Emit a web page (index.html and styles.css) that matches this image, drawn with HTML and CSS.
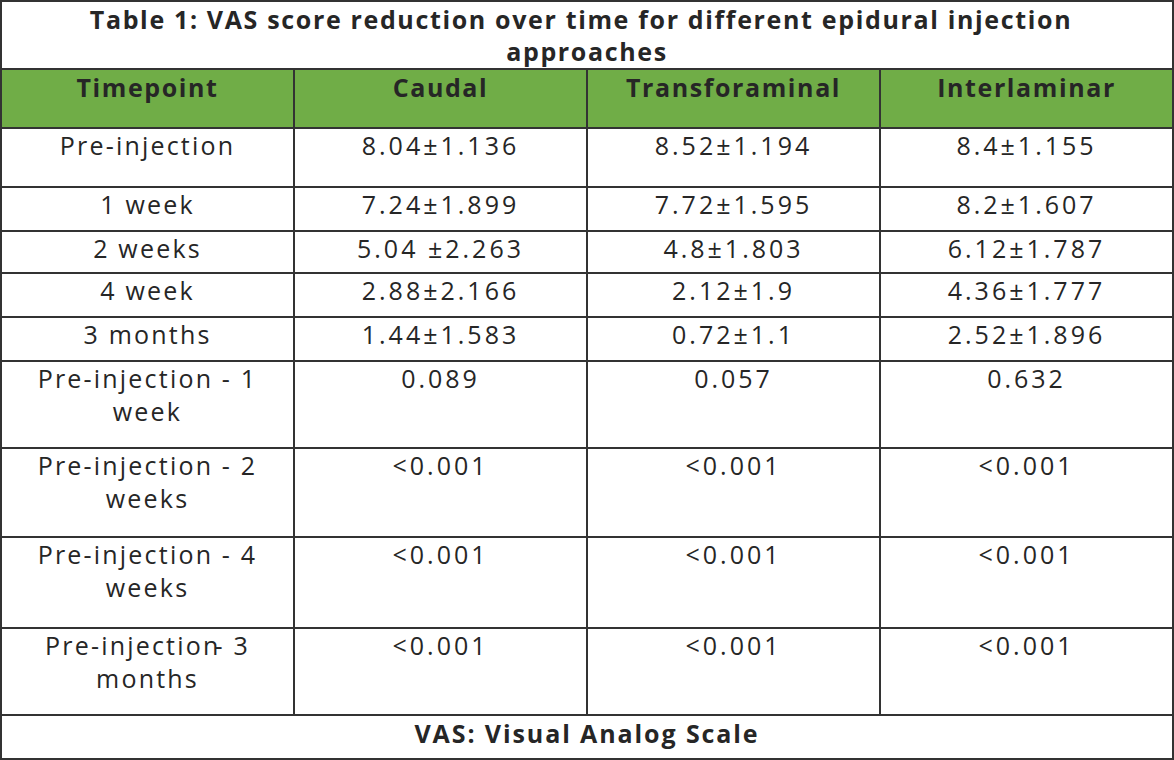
FILE: index.html
```html
<!DOCTYPE html>
<html lang="en">
<head>
<meta charset="utf-8">
<title>Table 1: VAS score reduction</title>
<link rel="stylesheet" href="styles.css">
</head>
<body>
<div class="vas-table">
  <div class="cell title"><span class="title-line">Table 1: VAS score reduction over time for different epidural injection</span><br>approaches</div>

  <div class="cell head">Timepoint</div>
  <div class="cell head">Caudal</div>
  <div class="cell head">Transforaminal</div>
  <div class="cell head">Interlaminar</div>

  <div class="cell label">Pre-injection</div>
  <div class="cell num">8.04±1.136</div>
  <div class="cell num">8.52±1.194</div>
  <div class="cell num">8.4±1.155</div>

  <div class="cell label">1 week</div>
  <div class="cell num">7.24±1.899</div>
  <div class="cell num">7.72±1.595</div>
  <div class="cell num">8.2±1.607</div>

  <div class="cell label">2 weeks</div>
  <div class="cell num">5.04 ±2.263</div>
  <div class="cell num">4.8±1.803</div>
  <div class="cell num">6.12±1.787</div>

  <div class="cell label">4 week</div>
  <div class="cell num">2.88±2.166</div>
  <div class="cell num">2.12±1.9</div>
  <div class="cell num">4.36±1.777</div>

  <div class="cell label">3 months</div>
  <div class="cell num">1.44±1.583</div>
  <div class="cell num">0.72±1.1</div>
  <div class="cell num">2.52±1.896</div>

  <div class="cell label">Pre-injection - 1<br>week</div>
  <div class="cell num">0.089</div>
  <div class="cell num">0.057</div>
  <div class="cell num">0.632</div>

  <div class="cell label">Pre-injection - 2<br>weeks</div>
  <div class="cell num">&lt;0.001</div>
  <div class="cell num">&lt;0.001</div>
  <div class="cell num">&lt;0.001</div>

  <div class="cell label">Pre-injection - 4<br>weeks</div>
  <div class="cell num">&lt;0.001</div>
  <div class="cell num">&lt;0.001</div>
  <div class="cell num">&lt;0.001</div>

  <div class="cell label">Pre-injection<span class="tight">-</span> 3<br>months</div>
  <div class="cell num">&lt;0.001</div>
  <div class="cell num">&lt;0.001</div>
  <div class="cell num">&lt;0.001</div>

  <div class="cell foot">VAS: Visual Analog Scale</div>
</div>
</body>
</html>
```

FILE: styles.css
```css
html, body {
  margin: 0;
  padding: 0;
  background: #ffffff;
}

.vas-table {
  box-sizing: border-box;
  width: 1174px;
  height: 760px;
  display: grid;
  grid-template-columns: repeat(4, 1fr);
  grid-template-rows: 68px 59px 59px 44px 42px 44px 44px 87px 89px 91px 87px 44px;
  border-top: 2px solid #333333;
  border-left: 2px solid #333333;
  font-family: "Open Sans", "Liberation Sans", sans-serif;
  font-size: 25px;
  line-height: 33px;
  color: #262626;
}

.cell {
  box-sizing: border-box;
  border-right: 2px solid #333333;
  border-bottom: 2px solid #333333;
  text-align: center;
  padding: 0;
  min-width: 0;
  white-space: nowrap;
}

.label {
  letter-spacing: 2.2px;
}

.num {
  letter-spacing: 3px;
}

.title {
  grid-column: 1 / -1;
  font-weight: 700;
  line-height: 32px;
  padding-top: 1px;
  letter-spacing: 1.65px;
}

.title-line {
  padding-right: 12px;
}

.head {
  background: #70ad47;
  font-weight: 700;
  padding-top: 1px;
  letter-spacing: 1.6px;
}

.foot {
  grid-column: 1 / -1;
  font-weight: 700;
  padding-top: 1px;
  letter-spacing: 1.9px;
}

.tight {
  margin-left: -6px;
}
```
